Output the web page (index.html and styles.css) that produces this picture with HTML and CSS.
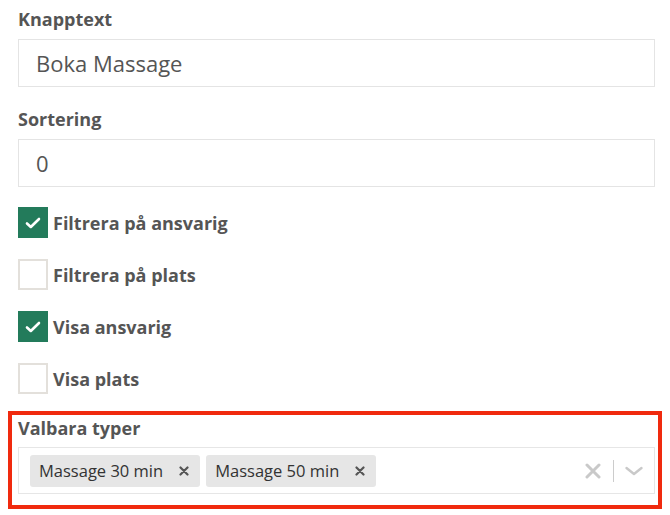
FILE: index.html
```
<!DOCTYPE html>
<html lang="sv">
<head>
<meta charset="utf-8">
<link rel="stylesheet" href="styles.css">
</head>
<body>
<div class="page">
  <div class="group">
    <div class="label">Knapptext</div>
    <div class="input">Boka Massage</div>
  </div>
  <div class="group">
    <div class="label">Sortering</div>
    <div class="input">0</div>
  </div>
  <div class="checks">
    <div class="check-row">
      <span class="box checked"><svg width="16" height="12" viewBox="0 0 16 12"><path d="M2 6.5l3.8 3.5L14 2" fill="none" stroke="#fff" stroke-width="2.6" stroke-linecap="round" stroke-linejoin="round"/></svg></span>
      <span class="check-label">Filtrera på ansvarig</span>
    </div>
    <div class="check-row">
      <span class="box"></span>
      <span class="check-label">Filtrera på plats</span>
    </div>
    <div class="check-row">
      <span class="box checked"><svg width="16" height="12" viewBox="0 0 16 12"><path d="M2 6.5l3.8 3.5L14 2" fill="none" stroke="#fff" stroke-width="2.6" stroke-linecap="round" stroke-linejoin="round"/></svg></span>
      <span class="check-label">Visa ansvarig</span>
    </div>
    <div class="check-row">
      <span class="box"></span>
      <span class="check-label">Visa plats</span>
    </div>
  </div>
  <div class="highlight">
    <div class="label">Valbara typer</div>
    <div class="select">
      <div class="chips">
        <span class="chip">Massage 30 min<span class="chip-x"><svg width="10" height="10" viewBox="0 0 10 10"><path d="M1.5 1.5l7 7M8.5 1.5l-7 7" stroke="#555" stroke-width="2.2" stroke-linecap="round"/></svg></span></span>
        <span class="chip">Massage 50 min<span class="chip-x"><svg width="10" height="10" viewBox="0 0 10 10"><path d="M1.5 1.5l7 7M8.5 1.5l-7 7" stroke="#555" stroke-width="2.2" stroke-linecap="round"/></svg></span></span>
      </div>
      <div class="indicators">
        <svg class="clear" width="16" height="16" viewBox="0 0 16 16"><path d="M2 2l12 12M14 2L2 14" stroke="#c9c9c9" stroke-width="3" stroke-linecap="round"/></svg>
        <span class="sep"></span>
        <svg class="chev" width="20" height="12" viewBox="0 0 20 12"><path d="M2.5 3l7.5 6 7.5-6" fill="none" stroke="#c9c9c9" stroke-width="2.4" stroke-linecap="round" stroke-linejoin="round"/></svg>
      </div>
    </div>
  </div>
</div>
</body>
</html>
```
FILE: styles.css
```
* { box-sizing: border-box; }
html, body { margin: 0; padding: 0; background: #fff; }
body { font-family: "Open Sans", "Noto Sans", sans-serif; }
.page {
  width: 670px;
  padding: 7px 15px 0 18px;
}
.group { margin-bottom: 20px; }
.label {
  font-size: 18px;
  line-height: 24px;
  font-weight: 700;
  color: #555;
  margin-bottom: 8px;
}
.input {
  height: 48px;
  border: 1px solid #e4e4e4;
  padding: 0 17px;
  font-size: 22px;
  line-height: 46px;
  color: #555;
}
.checks {
  display: flex;
  flex-direction: column;
  gap: 21px;
}
.check-row {
  display: flex;
  align-items: center;
  gap: 5px;
  height: 31px;
}
.box {
  width: 30px;
  height: 31px;
  border: 2px solid #e3e0db;
  display: flex;
  align-items: center;
  justify-content: center;
  background: #fff;
}
.box.checked {
  background: #237b5b;
  border-color: #237b5b;
}
.check-label {
  font-size: 18px;
  font-weight: 700;
  color: #555;
}
.highlight {
  margin: 17px -7px 0 -10px;
  border: 4px solid #f02a0e;
  padding: 1px 3px 11px 6px;
}
.highlight .label { margin-bottom: 7px; }
.select {
  height: 47px;
  border: 1px solid #e6e6e6;
  display: flex;
  align-items: center;
  padding: 0 0 0 11px;
}
.chips {
  flex: 1;
  display: flex;
  gap: 6px;
}
.chip {
  display: flex;
  align-items: center;
  height: 32px;
  background: #e6e6e6;
  border-radius: 3px;
  padding: 0 11px 0 9px;
  font-size: 16.5px;
  color: #333;
}
.chip-x {
  display: flex;
  margin-left: 16px;
}
.indicators {
  display: flex;
  align-items: center;
  padding-right: 10px;
}
.clear { margin-right: 12px; }
.sep {
  width: 1px;
  height: 22px;
  background: #ccc;
  margin-right: 10px;
}
```
